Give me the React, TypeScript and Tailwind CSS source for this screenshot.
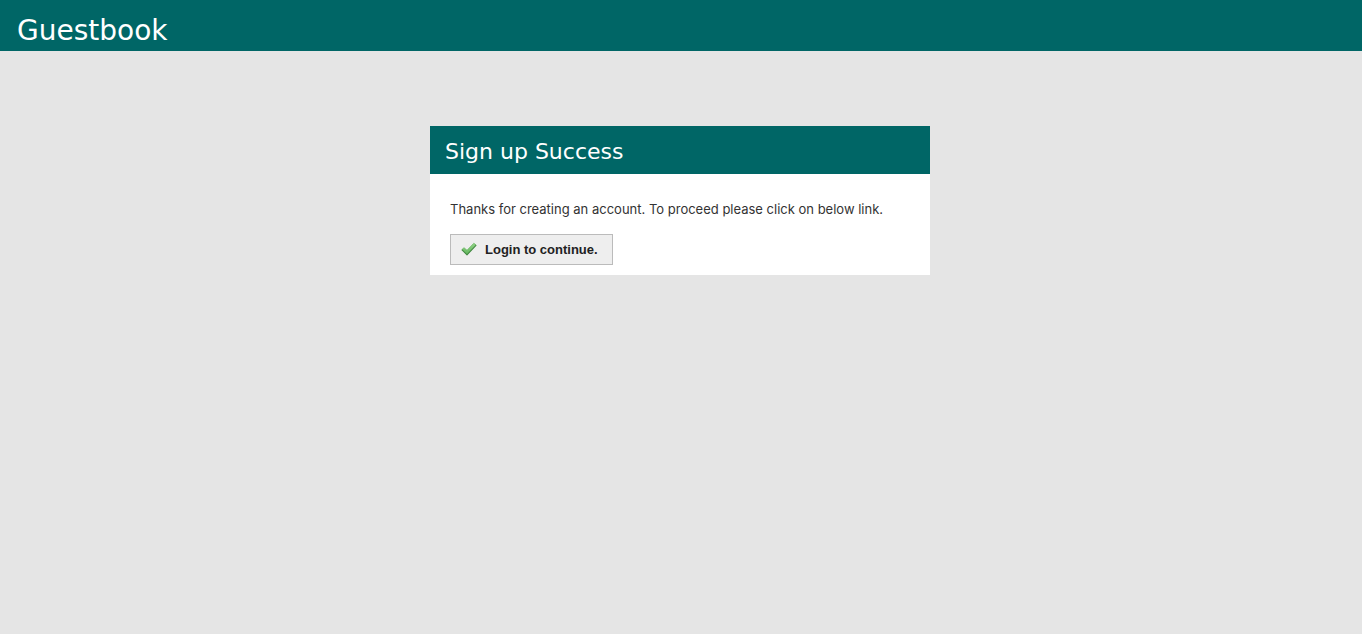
export default function App() {
  return (
    <div className="min-h-screen bg-[#e5e5e5] font-['Verdana','DejaVu_Sans',sans-serif] text-[#333]">
      <header className="bg-[#006666] px-[17px] pt-[13px] pb-[2px]">
        <h1 className="text-[28px] leading-9 text-white">Guestbook</h1>
      </header>
      <main className="pt-[75px] pr-[18px] pl-4">
        <section className="mx-auto w-full max-w-[500px] bg-white">
          <h2 className="bg-[#006666] px-[15px] pt-[10px] pb-[6px] text-[22px] leading-8 text-white">Sign up Success</h2>
          <div className="px-5 pt-[25px] pb-[10px]">
            <p className="font-['Inter','DejaVu_Sans',sans-serif] text-[13px] leading-5">
              Thanks for creating an account. To proceed please click on below link.
            </p>
            <a
              href="#login"
              className="mt-[15px] inline-flex h-[31px] items-center gap-2 border border-[#bbb] bg-[#eee] pr-[14px] pl-[10px] align-top font-['Liberation_Sans',sans-serif] text-[13px] font-bold text-[#222]"
            >
              <svg width="16" height="16" viewBox="0 0 16 16" aria-hidden="true">
                <defs>
                  <linearGradient id="tick" x1="0" y1="0" x2="0" y2="1">
                    <stop offset="0" stopColor="#93d488" />
                    <stop offset="1" stopColor="#5fb45a" />
                  </linearGradient>
                </defs>
                <path d="M0.8 7.7 3 5.7 6 8.3 12.8 1.3 15.2 3.1 6 13.1Z" fill="url(#tick)" />
                <path d="M0.8 7.7 3 5.7 6 8.3 12.8 1.3 15.2 3.1" fill="none" stroke="#6cb866" strokeWidth="0.8" strokeLinejoin="round" />
                <path d="M0.8 7.7 6 12.9 15.2 3.1" fill="none" stroke="#448a43" strokeWidth="1.1" strokeLinejoin="round" />
              </svg>
              Login to continue.
            </a>
          </div>
        </section>
      </main>
    </div>
  );
}
